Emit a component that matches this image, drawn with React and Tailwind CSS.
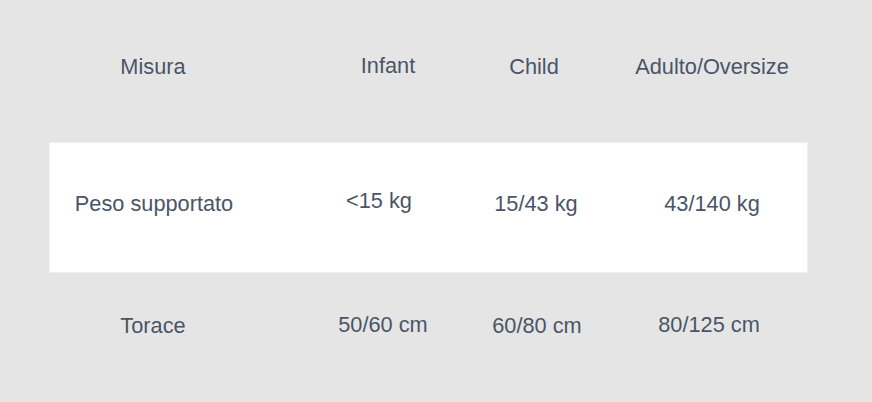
export default function App() {
  const cell = "flex items-center justify-center whitespace-nowrap";
  return (
    <div className="w-[872px] h-[402px] bg-[#e5e5e5] text-[#4a5568] text-[21.75px] overflow-hidden" style={{ fontFamily: '"Liberation Sans", Arial, sans-serif' }}>
      <div className="ml-[49px] w-[759px]">
        <div className="grid grid-cols-[256px_156px_148px_199px] h-[131px] mt-[11px] pb-[18px]">
          <div className={`${cell} pr-12`}>Misura</div>
          <div className={`${cell} pl-[10px] -mt-[3px]`}>Infant</div>
          <div className={`${cell} -ml-[2px]`}>Child</div>
          <div className={`${cell} pl-[7px]`}>Adulto/Oversize</div>
        </div>
        <div className="grid grid-cols-[256px_156px_148px_199px] h-[131px] bg-white border border-[#edf1f5] pb-[6px]">
          <div className={`${cell} pr-12`}>Peso supportato</div>
          <div className={`${cell} pr-[10px] -mt-[6px]`}>&lt;15 kg</div>
          <div className={cell}>15/43 kg</div>
          <div className={`${cell} pl-[5px]`}>43/140 kg</div>
        </div>
        <div className="grid grid-cols-[256px_156px_148px_199px] h-[131px] pb-[25px]">
          <div className={`${cell} pr-12`}>Torace</div>
          <div className={`${cell} -mt-[2px]`}>50/60 cm</div>
          <div className={`${cell} pl-[4px]`}>60/80 cm</div>
          <div className={`${cell} pl-[1px] -mt-[2px]`}>80/125 cm</div>
        </div>
      </div>
    </div>
  );
}
